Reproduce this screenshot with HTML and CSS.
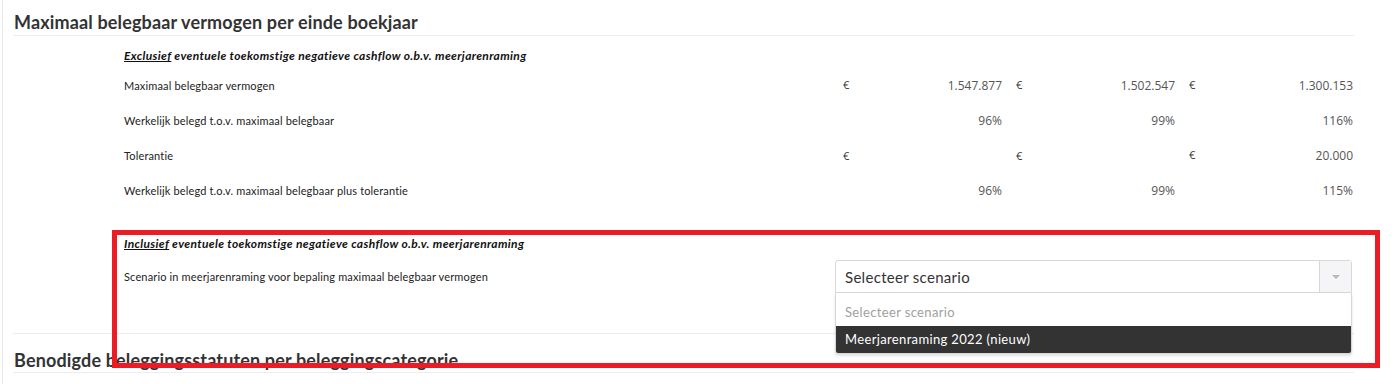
FILE: index.html
```html
<!DOCTYPE html>
<html lang="nl">
<head>
    <meta charset="UTF-8">
    <meta name="viewport" content="width=device-width, initial-scale=1.0">
    <title>Maximaal belegbaar vermogen</title>
    <link rel="stylesheet" href="styles.css">
</head>
<body>
    <div class="page">
        <section class="block first">
            <h2 class="block-title">Maximaal belegbaar vermogen per einde boekjaar</h2>

            <div class="calc">
                <div class="calc-caption"><u>Exclusief</u> eventuele toekomstige negatieve cashflow o.b.v. meerjarenraming</div>

                <div class="calc-row">
                    <div class="calc-label">Maximaal belegbaar vermogen</div>
                    <div class="calc-cell"><span class="cur">€</span><span class="val">1.547.877</span></div>
                    <div class="calc-cell"><span class="cur">€</span><span class="val">1.502.547</span></div>
                    <div class="calc-cell"><span class="cur">€</span><span class="val">1.300.153</span></div>
                </div>
                <div class="calc-row">
                    <div class="calc-label">Werkelijk belegd t.o.v. maximaal belegbaar</div>
                    <div class="calc-cell"><span class="val">96%</span></div>
                    <div class="calc-cell"><span class="val">99%</span></div>
                    <div class="calc-cell"><span class="val">116%</span></div>
                </div>
                <div class="calc-row">
                    <div class="calc-label">Tolerantie</div>
                    <div class="calc-cell"><span class="cur">€</span><span class="val"></span></div>
                    <div class="calc-cell"><span class="cur">€</span><span class="val"></span></div>
                    <div class="calc-cell"><span class="cur">€</span><span class="val">20.000</span></div>
                </div>
                <div class="calc-row">
                    <div class="calc-label">Werkelijk belegd t.o.v. maximaal belegbaar plus tolerantie</div>
                    <div class="calc-cell"><span class="val">96%</span></div>
                    <div class="calc-cell"><span class="val">99%</span></div>
                    <div class="calc-cell"><span class="val">115%</span></div>
                </div>
            </div>

            <div class="calc incl">
                <div class="calc-caption"><u>Inclusief</u> eventuele toekomstige negatieve cashflow o.b.v. meerjarenraming</div>

                <div class="calc-row scenario">
                    <div class="calc-label">Scenario in meerjarenraming voor bepaling maximaal belegbaar vermogen</div>
                    <div class="select">
                        <div class="select-box">
                            <span class="select-text">Selecteer scenario</span>
                            <span class="select-arrow"><i></i></span>
                        </div>
                        <ul class="select-menu">
                            <li class="placeholder">Selecteer scenario</li>
                            <li class="active">Meerjarenraming 2022 (nieuw)</li>
                        </ul>
                    </div>
                </div>
            </div>
        </section>

        <section class="block">
            <h2 class="block-title">Benodigde beleggingsstatuten per beleggingscategorie</h2>
        </section>

        <div class="highlight"></div>
    </div>
</body>
</html>
```

FILE: styles.css
```css
body {
    margin: 0;
    background-color: #fff;
    font-family: Lato, "Noto Sans", sans-serif;
    color: #222;
    overflow: hidden;
}

.page {
    position: relative;
    margin-left: 2px;
    border-left: 1px solid #e8e8e8;
    min-height: 384px;
}

.block {
    padding: 0 40px 0 10px;
}

.block.first {
    padding: 0 0 40px;
    margin: 0 40px 0 10px;
    border-bottom: 1px solid #ebedf0;
}

.block-title {
    margin: 0;
    padding: 10px 0 1px 1px;
    font-size: 18px;
    line-height: 24px;
    font-weight: 700;
    letter-spacing: 0.15px;
    color: #333;
    border-bottom: 1px solid #ebedf0;
}

.block + .block .block-title {
    padding-top: 14px;
    padding-bottom: 0;
}

.calc {
    margin-left: 111px;
    padding-top: 12px;
}

.calc.incl {
    padding-top: 28px;
}

.calc-caption {
    font-size: 12px;
    line-height: 16px;
    font-weight: 700;
    font-style: italic;
    letter-spacing: 0.35px;
    color: #111;
    margin-bottom: 4px;
}

.calc.incl .calc-caption {
    margin-bottom: 8px;
}

.calc-row {
    display: grid;
    grid-template-columns: 711px repeat(3, 173px);
    align-items: center;
    height: 35px;
}

.calc-label {
    font-size: 11px;
    letter-spacing: 0.15px;
    color: #222;
}

.calc-cell {
    display: flex;
    justify-content: space-between;
    padding: 0 6px 0 8px;
    font-family: "Open Sans", sans-serif;
    font-size: 12px;
    color: #555;
}

.calc-cell:last-child {
    padding-right: 1px;
}

.cur {
    color: #333;
    font-size: 11px;
}

.val {
    margin-left: auto;
}

.calc-row.scenario {
    height: 33px;
    align-items: start;
}

.calc-row.scenario .calc-label {
    line-height: 33px;
}

.select {
    grid-column: 2 / span 3;
    position: relative;
    margin-right: 2px;
}

.select-box {
    display: flex;
    height: 31px;
    border: 1px solid #d8d8d8;
    border-radius: 3px 3px 0 0;
    background: #fff;
}

.select-text {
    flex: 1;
    padding-left: 9px;
    line-height: 32px;
    font-size: 15px;
    letter-spacing: 0.3px;
    color: #333;
}

.select-arrow {
    width: 31px;
    border-left: 1px solid #d8d8d8;
    background: #f5f5f7;
    display: flex;
    align-items: center;
    justify-content: center;
}

.select-arrow i {
    width: 0;
    height: 0;
    border-left: 4px solid transparent;
    border-right: 4px solid transparent;
    border-top: 4px solid #b8b8b8;
}

.select-menu {
    position: absolute;
    top: 33px;
    left: 0;
    right: 0;
    margin: 0;
    padding: 0;
    list-style: none;
    background: #fff;
    border: 1px solid #d8d8d8;
    border-top: none;
    border-radius: 0 0 3px 3px;
    box-shadow: 0 2px 3px rgba(0, 0, 0, 0.12);
    z-index: 2;
    overflow: hidden;
}

.select-menu li {
    padding: 0 9px;
    font-size: 13px;
    letter-spacing: 0.35px;
}

.select-menu .placeholder {
    height: 33px;
    line-height: 38px;
    color: #a0a0a0;
}

.select-menu .active {
    height: 27px;
    line-height: 27px;
    background: #333;
    color: #fff;
}

.highlight {
    position: absolute;
    left: 109px;
    top: 230px;
    width: 1258px;
    height: 128px;
    border: 5px solid #ec1c24;
    z-index: 3;
}
```
